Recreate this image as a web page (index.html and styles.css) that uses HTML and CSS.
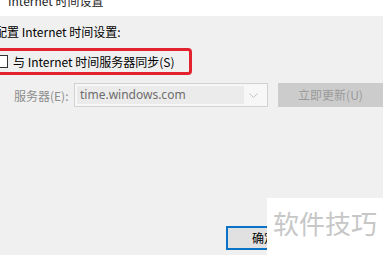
FILE: index.html
```html
<!DOCTYPE html>
<html lang="zh-CN">
<head>
    <meta charset="UTF-8">
    <title>Internet 时间设置</title>
    <link rel="stylesheet" href="styles.css">
</head>
<body>
    <div class="titlebar">Internet 时间设置</div>
    <div class="dialog">
        <div class="heading">配置 Internet 时间设置:</div>

        <label class="sync-box">
            <span class="checkbox"></span>
            <span>与 Internet 时间服务器同步(S)</span>
        </label>

        <div class="server-row">
            <span class="server-label">服务器(E):</span>
            <div class="combo">
                <span class="combo-value">time.windows.com</span>
                <svg class="chevron" width="9" height="5" viewBox="0 0 9 5">
                    <path d="M0.5 0.5 L4.5 4.5 L8.5 0.5" fill="none" stroke="#c4c4c4" stroke-width="1"/>
                </svg>
            </div>
            <div class="update-btn">立即更新(U)</div>
        </div>

        <div class="footer">
            <div class="ok-btn">确定</div>
        </div>

        <div class="watermark">软件技巧</div>
    </div>
</body>
</html>
```

FILE: styles.css
```css
html, body {
    margin: 0;
    padding: 0;
    overflow: hidden;
}
body {
    width: 383px;
    height: 255px;
    font-family: 'Noto Sans CJK SC', sans-serif;
    font-size: 12px;
    color: #000;
    background: #f0f0f0;
}
.titlebar {
    height: 16px;
    background: #fff;
    padding-left: 8px;
    line-height: 2px;
    font-size: 12px;
    color: #222;
}
.dialog {
    position: relative;
    height: 239px;
    background: #f0f0f0;
}
.heading {
    padding-top: 9px;
    margin-left: -5px;
    line-height: 14px;
    font-size: 12px;
}
.sync-box {
    display: flex;
    align-items: center;
    gap: 5px;
    margin-top: 9px;
    margin-left: -12px;
    width: 194px;
    height: 21px;
    border: 3px solid #e3222f;
    border-radius: 4px;
    padding-left: 4px;
}
.checkbox {
    width: 11px;
    height: 11px;
    border: 1px solid #333;
    background: #fff;
}
.server-row {
    display: flex;
    align-items: center;
    margin-top: 8px;
    padding-left: 14px;
    height: 24px;
}
.server-label {
    color: #8d8d8d;
    width: 60px;
}
.combo {
    display: flex;
    align-items: center;
    width: 190px;
    height: 22px;
    border: 1px solid #d2d2d2;
    background: #f7f7f7;
    padding-left: 2px;
}
.combo-value {
    width: 164px;
    height: 18px;
    line-height: 18px;
    background: #ebebeb;
    color: #6d6d6d;
    padding-left: 3px;
    font-family: 'Noto Sans', sans-serif;
    font-size: 12px;
}
.chevron {
    margin-left: 5px;
}
.update-btn {
    margin-left: 10px;
    width: 105px;
    height: 24px;
    line-height: 24px;
    text-align: center;
    background: #cccccc;
    color: #9a9a9a;
    font-size: 12px;
}
.footer {
    display: flex;
    margin-top: 119px;
    padding-left: 226px;
}
.ok-btn {
    width: 72px;
    height: 20px;
    line-height: 20px;
    border: 2px solid #0a72c7;
    background: #e1e1e1;
    text-align: center;
}
.watermark {
    position: absolute;
    left: 267px;
    top: 182px;
    width: 116px;
    height: 57px;
    background: #fff;
    color: #c7c7c7;
    font-size: 26px;
    line-height: 50px;
    padding-left: 6px;
    box-sizing: border-box;
}
```
